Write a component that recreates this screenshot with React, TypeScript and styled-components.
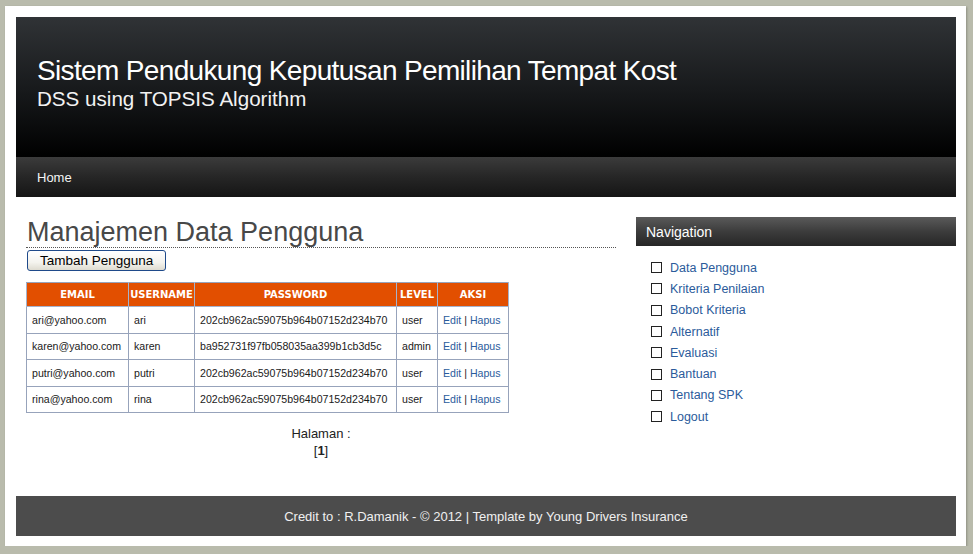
import styled, { createGlobalStyle } from 'styled-components';

const GlobalStyle = createGlobalStyle`
  body {
    margin: 0;
    background: #b9bbac;
    font-family: "Liberation Sans", Arial, sans-serif;
  }
`;

const Page = styled.div`
  width: 940px;
  margin: 6px 0 0 5px;
  padding: 11px 10px 10px 11px;
  background: #ffffff;
  box-shadow: 1px 1px 2px #8d8f82;
`;

const Header = styled.div`
  height: 140px;
  box-sizing: border-box;
  padding: 38px 0 0 21px;
  background: linear-gradient(to bottom, #303336 0%, #16181a 55%, #000000 100%);
  color: #ffffff;
`;

const Title = styled.h1`
  margin: 0;
  font-size: 28px;
  font-weight: normal;
  line-height: 32px;
  letter-spacing: -0.65px;
`;

const Subtitle = styled.div`
  font-size: 20.6px;
  line-height: 24px;
  color: #f2f2f2;
`;

const NavBar = styled.div`
  height: 40px;
  display: flex;
  align-items: center;
  padding-left: 21px;
  background: linear-gradient(to bottom, #3b3b3b 0%, #262626 50%, #151515 100%);
`;

const NavLink = styled.a`
  color: #f4f4f4;
  font-size: 13px;
  text-decoration: none;
`;

const Main = styled.div`
  display: flex;
  gap: 20px;
  min-height: 299px;
  box-sizing: border-box;
  padding: 20px 0 0 10px;
`;

const Content = styled.div`
  width: 590px;
  display: flex;
  flex-direction: column;
  align-items: flex-start;
`;

const Heading = styled.h2`
  align-self: stretch;
  margin: 0;
  padding-left: 1px;
  font-size: 27px;
  font-weight: normal;
  line-height: 30px;
  color: #484848;
  border-bottom: 1px dotted #555;
`;

const AddButton = styled.button`
  margin: 2px 0 0 1px;
  height: 21px;
  padding: 0 12px;
  font-family: "Liberation Sans", Arial, sans-serif;
  font-size: 13.5px;
  color: #000;
  border: 1px solid #1f4a8a;
  border-radius: 3px;
  background: linear-gradient(to bottom, #ffffff 0%, #f4f3ee 60%, #dedbd0 100%);
`;

const Table = styled.table`
  margin-top: 11px;
  width: 482px;
  table-layout: fixed;
  border-collapse: collapse;
  font-size: 10.6px;
  color: #1a1a1a;
  border: 1px solid #97a3bb;
`;

const Th = styled.th<{ $w: number }>`
  width: ${(p) => p.$w}px;
  height: 24px;
  box-sizing: border-box;
  padding: 0;
  background: #e24f00;
  color: #ffffff;
  font-family: "DejaVu Sans", Verdana, sans-serif;
  font-size: 10px;
  font-weight: bold;
  border: 1px solid #a5b3cc;
  border-top-color: #97a3bb;
`;

const Td = styled.td`
  height: 25.5px;
  padding: 0 4px 0 5px;
  border: 1px solid #97a3bb;
  white-space: nowrap;
  overflow: hidden;
`;

const LinkText = styled.a`
  color: #2a5b9c;
  text-decoration: none;
`;

const Pager = styled.div`
  align-self: stretch;
  margin-top: 12px;
  text-align: center;
  font-size: 13px;
  line-height: 17px;
  color: #222;
`;

const Sidebar = styled.div`
  width: 320px;
`;

const SideHeader = styled.div`
  height: 29px;
  display: flex;
  align-items: center;
  padding-left: 10px;
  font-size: 14px;
  color: #ffffff;
  background: linear-gradient(to bottom, #5a5a5a 0%, #3c3c3c 50%, #262626 100%);
`;

const SideList = styled.ul`
  list-style: none;
  margin: 0;
  padding: 11px 0 0 15px;
`;

const SideItem = styled.li`
  display: flex;
  align-items: center;
  gap: 8px;
  height: 21.3px;
  font-size: 12.5px;
`;

const Box = styled.span`
  width: 9px;
  height: 9px;
  border: 1px solid #222;
  background: #fff;
`;

const SideLink = styled.a`
  color: #2b5b9b;
  text-decoration: none;
`;

const Footer = styled.div`
  height: 40px;
  display: flex;
  align-items: center;
  justify-content: center;
  background: #4c4c4c;
  color: #f0f0f0;
  font-size: 13px;
`;

const columns = [
  { label: 'EMAIL', w: 102 },
  { label: 'USERNAME', w: 66 },
  { label: 'PASSWORD', w: 202 },
  { label: 'LEVEL', w: 41 },
  { label: 'AKSI', w: 71 },
];

const users = [
  { email: 'ari@yahoo.com', username: 'ari', password: '202cb962ac59075b964b07152d234b70', level: 'user' },
  { email: 'karen@yahoo.com', username: 'karen', password: 'ba952731f97fb058035aa399b1cb3d5c', level: 'admin' },
  { email: 'putri@yahoo.com', username: 'putri', password: '202cb962ac59075b964b07152d234b70', level: 'user' },
  { email: 'rina@yahoo.com', username: 'rina', password: '202cb962ac59075b964b07152d234b70', level: 'user' },
];

const menu = [
  'Data Pengguna',
  'Kriteria Penilaian',
  'Bobot Kriteria',
  'Alternatif',
  'Evaluasi',
  'Bantuan',
  'Tentang SPK',
  'Logout',
];

const App = () => {
  return (
    <>
      <GlobalStyle />
      <Page>
        <Header>
          <Title>Sistem Pendukung Keputusan Pemilihan Tempat Kost</Title>
          <Subtitle>DSS using TOPSIS Algorithm</Subtitle>
        </Header>
        <NavBar>
          <NavLink href="#">Home</NavLink>
        </NavBar>
        <Main>
          <Content>
            <Heading>Manajemen Data Pengguna</Heading>
            <AddButton>Tambah Pengguna</AddButton>
            <Table>
              <thead>
                <tr>
                  {columns.map((c) => (
                    <Th key={c.label} $w={c.w}>
                      {c.label}
                    </Th>
                  ))}
                </tr>
              </thead>
              <tbody>
                {users.map((u) => (
                  <tr key={u.email}>
                    <Td>{u.email}</Td>
                    <Td>{u.username}</Td>
                    <Td>{u.password}</Td>
                    <Td>{u.level}</Td>
                    <Td>
                      <LinkText href="#">Edit</LinkText> | <LinkText href="#">Hapus</LinkText>
                    </Td>
                  </tr>
                ))}
              </tbody>
            </Table>
            <Pager>
              Halaman :
              <br />[<b>1</b>]
            </Pager>
          </Content>
          <Sidebar>
            <SideHeader>Navigation</SideHeader>
            <SideList>
              {menu.map((m) => (
                <SideItem key={m}>
                  <Box />
                  <SideLink href="#">{m}</SideLink>
                </SideItem>
              ))}
            </SideList>
          </Sidebar>
        </Main>
        <Footer>Credit to : R.Damanik - © 2012 | Template by Young Drivers Insurance</Footer>
      </Page>
    </>
  );
};

export default App;
